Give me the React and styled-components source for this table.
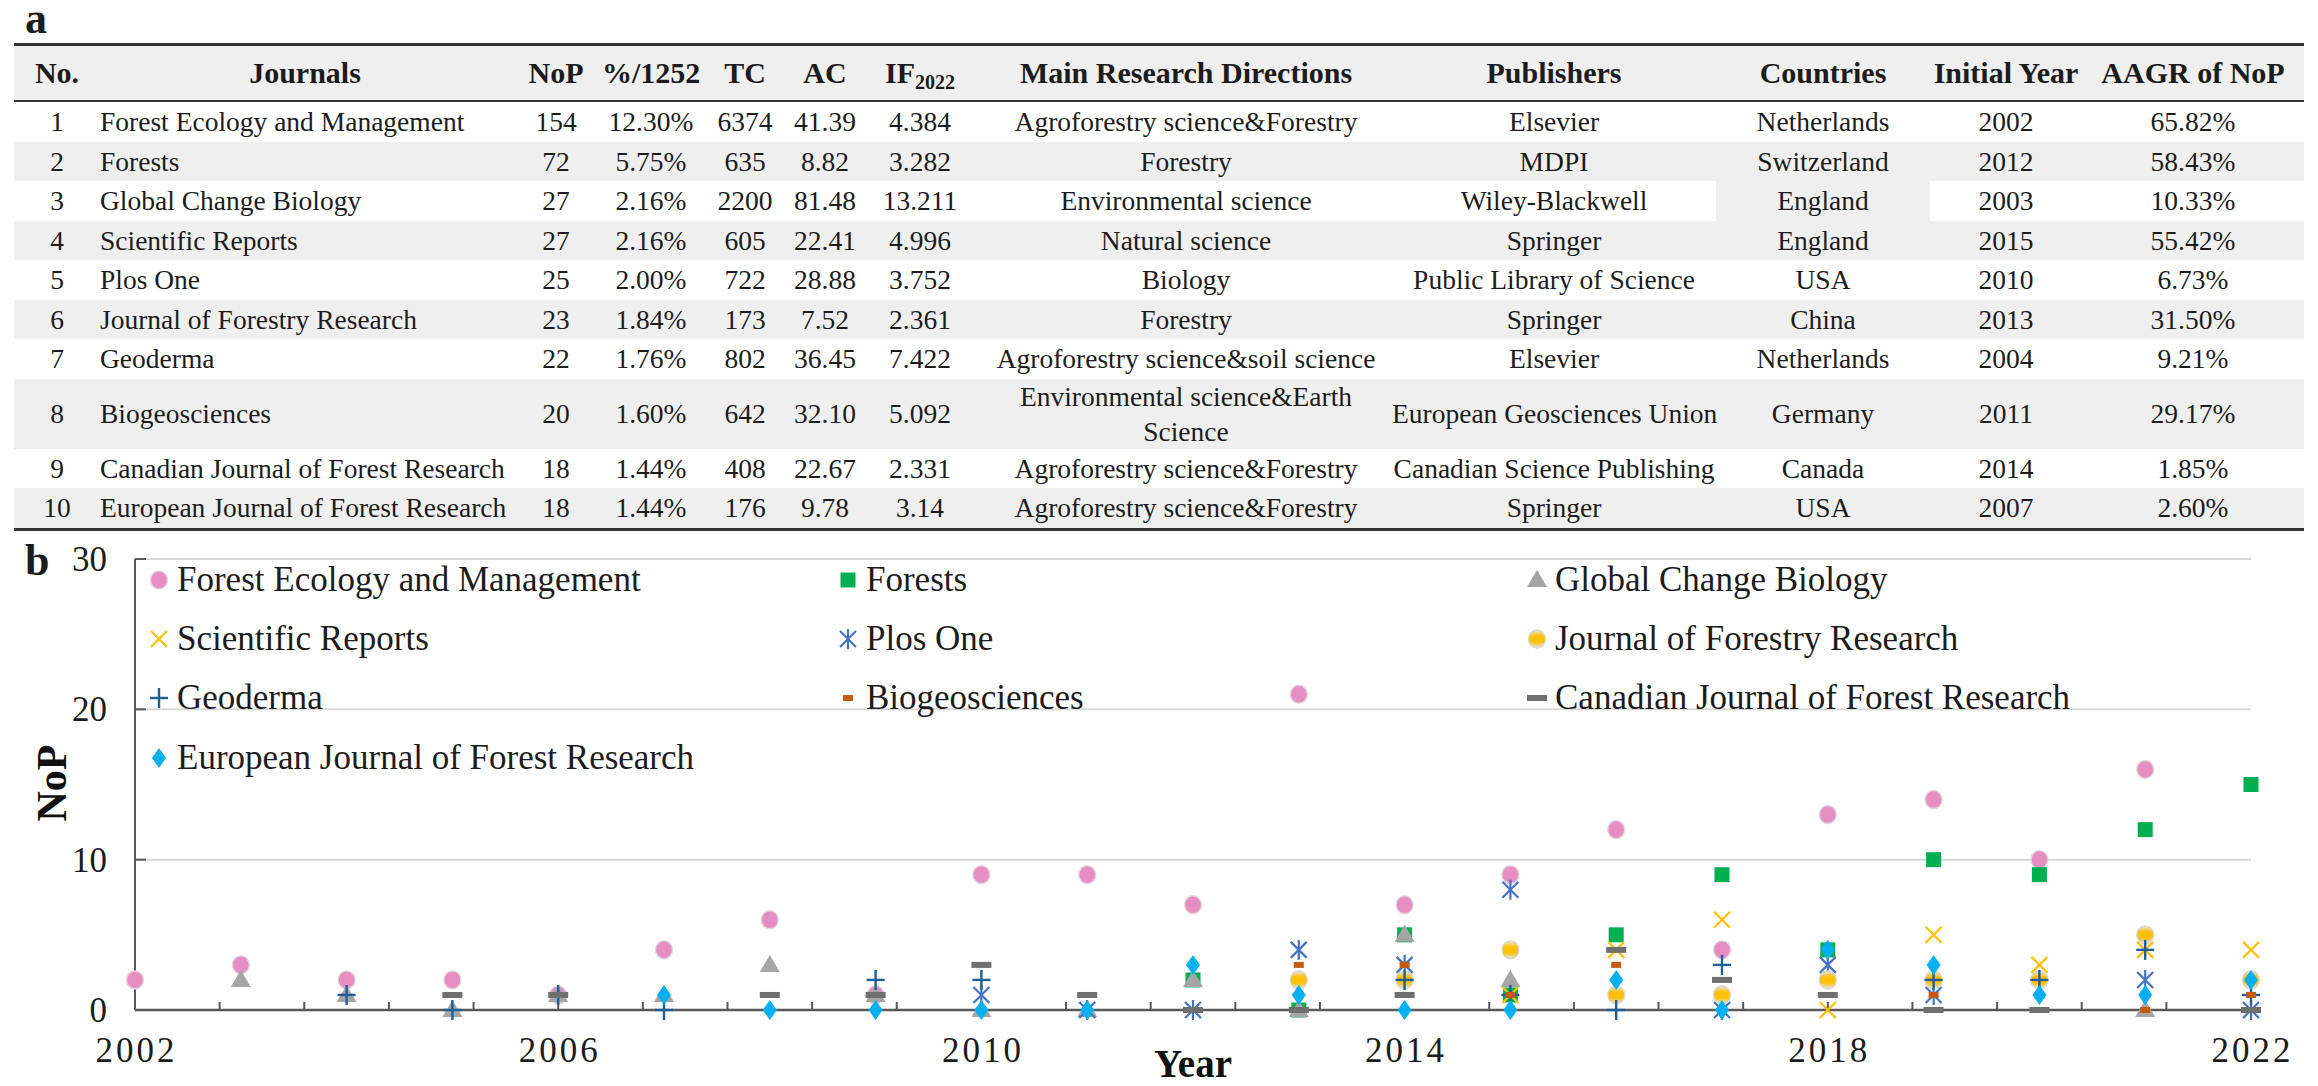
import React from "react";
import styled, { createGlobalStyle } from "styled-components";

const GlobalStyle = createGlobalStyle`
  html, body { margin: 0; padding: 0; background: #ffffff; }
  body {
    font-family: "Liberation Serif", "Times New Roman", serif;
    color: #1c1c1c;
  }
`;

const Page = styled.div`
  width: 2318px;
  height: 1086px;
  overflow: hidden;
  display: flex;
  flex-direction: column;
  background: #ffffff;
`;

const PanelLabel = styled.div`
  font-weight: 700;
  font-size: 44px;
  line-height: 37px;
  height: 43px;
  padding-left: 25px;
  box-sizing: border-box;
`;

const Table = styled.table`
  margin: 0 14px;
  width: 2290px;
  table-layout: fixed;
  border-collapse: separate;
  border-spacing: 0;
  border-top: 3px solid #333333;
  border-bottom: 3px solid #333333;
  font-size: 27.5px;
  color: #1c1c1c;
`;

const HeadCell = styled.th`
  height: 54px;
  padding: 0;
  background: #efefef;
  font-weight: 700;
  font-size: 30px;
  text-align: center;
  vertical-align: middle;
  white-space: nowrap;
  border-bottom: 2px solid #333333;
`;

const Sub = styled.sub`
  font-size: 20px;
  line-height: 0;
  vertical-align: -6px;
`;

const Row = styled.tr`
  background: ${(p) => (p.$shade ? "#efefef" : "#ffffff")};
`;

const Cell = styled.td`
  height: ${(p) => (p.$tall ? "70px" : "39.5px")};
  padding: 0;
  text-align: ${(p) => p.$align || "center"};
  vertical-align: middle;
  white-space: nowrap;
  line-height: ${(p) => (p.$tall ? "35px" : "29px")};
  background: ${(p) => (p.$shade ? "#efefef" : "transparent")};
`;

const Line = styled.span`
  display: block;
`;

const ChartSection = styled.div`
  position: relative;
  flex: 1;
`;

const ChartLabel = styled(PanelLabel)`
  position: absolute;
  left: 0;
  top: 11px;
`;

const ChartSvg = styled.svg`
  display: block;
  font-family: "Liberation Serif", "Times New Roman", serif;
`;

const COLS = [86, 410, 92, 98, 90, 70, 120, 412, 324, 214, 152, 222];

const HEADERS = [
  "No.",
  "Journals",
  "NoP",
  "%/1252",
  "TC",
  "AC",
  "IF",
  "Main Research Directions",
  "Publishers",
  "Countries",
  "Initial Year",
  "AAGR of NoP",
];

const ROWS = [
  [1, "Forest Ecology and Management", 154, "12.30%", 6374, "41.39", "4.384", "Agroforestry science&Forestry", "Elsevier", "Netherlands", 2002, "65.82%"],
  [2, "Forests", 72, "5.75%", 635, "8.82", "3.282", "Forestry", "MDPI", "Switzerland", 2012, "58.43%"],
  [3, "Global Change Biology", 27, "2.16%", 2200, "81.48", "13.211", "Environmental science", "Wiley-Blackwell", "England", 2003, "10.33%"],
  [4, "Scientific Reports", 27, "2.16%", 605, "22.41", "4.996", "Natural science", "Springer", "England", 2015, "55.42%"],
  [5, "Plos One", 25, "2.00%", 722, "28.88", "3.752", "Biology", "Public Library of Science", "USA", 2010, "6.73%"],
  [6, "Journal of Forestry Research", 23, "1.84%", 173, "7.52", "2.361", "Forestry", "Springer", "China", 2013, "31.50%"],
  [7, "Geoderma", 22, "1.76%", 802, "36.45", "7.422", "Agroforestry science&soil science", "Elsevier", "Netherlands", 2004, "9.21%"],
  [8, "Biogeosciences", 20, "1.60%", 642, "32.10", "5.092", ["Environmental science&Earth", "Science"], "European Geosciences Union", "Germany", 2011, "29.17%"],
  [9, "Canadian Journal of Forest Research", 18, "1.44%", 408, "22.67", "2.331", "Agroforestry science&Forestry", "Canadian Science Publishing", "Canada", 2014, "1.85%"],
  [10, "European Journal of Forest Research", 18, "1.44%", 176, "9.78", "3.14", "Agroforestry science&Forestry", "Springer", "USA", 2007, "2.60%"],
];

const SERIES = [
  { name: "Forest Ecology and Management", kind: "circle", data: { 2002: 2, 2003: 3, 2004: 2, 2005: 2, 2006: 1, 2007: 4, 2008: 6, 2009: 1, 2010: 9, 2011: 9, 2012: 7, 2013: 21, 2014: 7, 2015: 9, 2016: 12, 2017: 4, 2018: 13, 2019: 14, 2020: 10, 2021: 16 } },
  { name: "Forests", kind: "square", data: { 2012: 2, 2013: 0, 2014: 5, 2015: 1, 2016: 5, 2017: 9, 2018: 4, 2019: 10, 2020: 9, 2021: 12, 2022: 15 } },
  { name: "Global Change Biology", kind: "triangle", data: { 2003: 2, 2004: 1, 2005: 0, 2006: 1, 2007: 1, 2008: 3, 2009: 1, 2010: 0, 2011: 0, 2012: 2, 2013: 0, 2014: 5, 2015: 2, 2021: 0 } },
  { name: "Scientific Reports", kind: "xmark", data: { 2015: 1, 2016: 4, 2017: 6, 2018: 0, 2019: 5, 2020: 3, 2021: 4, 2022: 4 } },
  { name: "Plos One", kind: "asterisk", data: { 2010: 1, 2011: 0, 2012: 0, 2013: 4, 2014: 3, 2015: 8, 2017: 0, 2018: 3, 2019: 1, 2021: 2, 2022: 0 } },
  { name: "Journal of Forestry Research", kind: "gold", data: { 2013: 2, 2014: 2, 2015: 4, 2016: 1, 2017: 1, 2018: 2, 2019: 2, 2020: 2, 2021: 5, 2022: 2 } },
  { name: "Geoderma", kind: "plus", data: { 2004: 1, 2005: 0, 2006: 1, 2007: 0, 2009: 2, 2010: 2, 2014: 2, 2015: 1, 2016: 0, 2017: 3, 2019: 2, 2020: 2, 2021: 4, 2022: 1 } },
  { name: "Biogeosciences", kind: "bio", data: { 2012: 3, 2013: 3, 2014: 3, 2015: 1, 2016: 3, 2019: 1, 2020: 1, 2021: 0, 2022: 1 } },
  { name: "Canadian Journal of Forest Research", kind: "dash", data: { 2005: 1, 2006: 1, 2008: 1, 2009: 1, 2010: 3, 2011: 1, 2012: 0, 2013: 0, 2014: 1, 2016: 4, 2017: 2, 2018: 1, 2019: 0, 2020: 0, 2022: 0 } },
  { name: "European Journal of Forest Research", kind: "diamond", data: { 2007: 1, 2008: 0, 2009: 0, 2010: 0, 2011: 0, 2012: 3, 2013: 1, 2014: 0, 2015: 0, 2016: 2, 2017: 0, 2018: 4, 2019: 3, 2020: 1, 2021: 1, 2022: 2 } },
];

const X0 = 135;
const X1 = 2251;
const YTOP = 28;
const Y0 = 479;
const UNIT = (Y0 - YTOP) / 30;
const STEP = (X1 - X0) / 20;
const xOf = (yr) => X0 + (yr - 2002) * STEP;
const yOf = (v) => Y0 - v * UNIT;

function Marker({ kind, x, y }) {
  switch (kind) {
    case "circle":
      return <ellipse cx={x} cy={y} rx={8.5} ry={9} fill="#e68ec2" stroke="#e0d6dc" strokeWidth={1.4} />;
    case "square":
      return <rect x={x - 7.5} y={y - 7.5} width={15} height={15} fill="#00b050" />;
    case "triangle":
      return <polygon points={`${x},${y - 10} ${x - 10},${y + 7} ${x + 10},${y + 7}`} fill="#a5a5a5" />;
    case "xmark":
      return (
        <g stroke="#ffc000" strokeWidth={2.2}>
          <line x1={x - 8} y1={y - 8} x2={x + 8} y2={y + 8} />
          <line x1={x - 8} y1={y + 8} x2={x + 8} y2={y - 8} />
        </g>
      );
    case "asterisk":
      return (
        <g stroke="#4472c4" strokeWidth={2.2}>
          <line x1={x - 8} y1={y - 8} x2={x + 8} y2={y + 8} />
          <line x1={x - 8} y1={y + 8} x2={x + 8} y2={y - 8} />
          <line x1={x} y1={y - 10} x2={x} y2={y + 10} />
        </g>
      );
    case "gold":
      return <ellipse cx={x} cy={y} rx={8.5} ry={9} fill="url(#goldFill)" stroke="#d8d8d8" strokeWidth={1.4} />;
    case "plus":
      return (
        <g stroke="#1f5f99" strokeWidth={2.4}>
          <line x1={x - 9} y1={y} x2={x + 9} y2={y} />
          <line x1={x} y1={y - 10} x2={x} y2={y + 10} />
        </g>
      );
    case "bio":
      return <rect x={x - 5} y={y - 3} width={10} height={6} fill="#c55a11" />;
    case "dash":
      return <rect x={x - 10} y={y - 3} width={20} height={6} fill="#6f6f6f" />;
    case "diamond":
      return <polygon points={`${x},${y - 10} ${x + 7},${y} ${x},${y + 10} ${x - 7},${y}`} fill="#00b0f0" />;
    default:
      return null;
  }
}

const LEGEND_ROWS = [49, 108, 167, 227];
const LEGEND_COLS = [159, 848, 1537];

function Chart() {
  const ticks = [];
  for (let k = 0; k <= 25; k++) ticks.push(X0 + (k * (X1 - X0)) / 25);
  const yLabels = [0, 10, 20, 30];
  const xLabels = [2002, 2006, 2010, 2014, 2018, 2022];
  return (
    <ChartSvg width={2318} height={555} viewBox="0 0 2318 555">
      <defs>
        <linearGradient id="goldFill" x1="0" y1="0" x2="0" y2="1">
          <stop offset="0" stopColor="#e4e4e4" />
          <stop offset="0.35" stopColor="#ffc000" />
          <stop offset="0.65" stopColor="#ffc000" />
          <stop offset="1" stopColor="#e4e4e4" />
        </linearGradient>
      </defs>

      {[10, 20, 30].map((v) => (
        <line key={v} x1={X0} x2={X1} y1={yOf(v)} y2={yOf(v)} stroke="#d9d9d9" strokeWidth={2} />
      ))}

      <line x1={X0} x2={X0} y1={YTOP} y2={Y0} stroke="#595959" strokeWidth={2} />
      {yLabels.map((v) => (
        <line key={v} x1={X0} x2={X0 + 11} y1={yOf(v)} y2={yOf(v)} stroke="#595959" strokeWidth={2} />
      ))}
      <line x1={X0} x2={X1} y1={Y0} y2={Y0} stroke="#595959" strokeWidth={2.5} />
      {ticks.map((t, i) => (
        <line key={i} x1={t} x2={t} y1={Y0} y2={Y0 - 8} stroke="#595959" strokeWidth={2} />
      ))}

      {yLabels.map((v) => (
        <text key={v} x={107} y={yOf(v) + 12} fontSize={35} textAnchor="end" fill="#1c1c1c">
          {v}
        </text>
      ))}
      {xLabels.map((yr) => (
        <text key={yr} x={xOf(yr) + 1.5} y={531} fontSize={35} letterSpacing={3} textAnchor="middle" fill="#1c1c1c">
          {yr}
        </text>
      ))}
      <text x={1193} y={546} fontSize={39} fontWeight={700} textAnchor="middle" fill="#111">
        Year
      </text>
      <text x={66} y={252} fontSize={42} fontWeight={700} textAnchor="middle" fill="#111" transform="rotate(-90 66 252)">
        NoP
      </text>

      {SERIES.map((s, i) => {
        const col = LEGEND_COLS[i % 3];
        const row = LEGEND_ROWS[Math.floor(i / 3)];
        return (
          <g key={s.name}>
            <Marker kind={s.kind} x={col} y={row} />
            <text x={col + 18} y={row + 11} fontSize={35} fill="#1c1c1c">
              {s.name}
            </text>
          </g>
        );
      })}

      {SERIES.map((s) => (
        <g key={s.name}>
          {Object.entries(s.data).map(([yr, v]) => (
            <Marker key={yr} kind={s.kind} x={xOf(Number(yr))} y={yOf(v)} />
          ))}
        </g>
      ))}
    </ChartSvg>
  );
}

function JournalTable() {
  return (
    <Table>
      <colgroup>
        {COLS.map((w, i) => (
          <col key={i} style={{ width: `${w}px` }} />
        ))}
      </colgroup>
      <thead>
        <tr>
          {HEADERS.map((h) => (
            <HeadCell key={h}>
              {h === "IF" ? (
                <>
                  IF<Sub>2022</Sub>
                </>
              ) : (
                h
              )}
            </HeadCell>
          ))}
        </tr>
      </thead>
      <tbody>
        {ROWS.map((r, ri) => {
          const tall = Array.isArray(r[7]);
          return (
            <Row key={r[0]} $shade={ri % 2 === 1}>
              {r.map((c, ci) => (
                <Cell
                  key={ci}
                  $tall={tall}
                  $align={ci === 1 ? "left" : "center"}
                  $shade={ri === 2 && ci === 9}
                >
                  {Array.isArray(c) ? c.map((l) => <Line key={l}>{l}</Line>) : c}
                </Cell>
              ))}
            </Row>
          );
        })}
      </tbody>
    </Table>
  );
}

export default function App() {
  return (
    <>
      <GlobalStyle />
      <Page>
        <PanelLabel>a</PanelLabel>
        <JournalTable />
        <ChartSection>
          <ChartLabel>b</ChartLabel>
          <Chart />
        </ChartSection>
      </Page>
    </>
  );
}
